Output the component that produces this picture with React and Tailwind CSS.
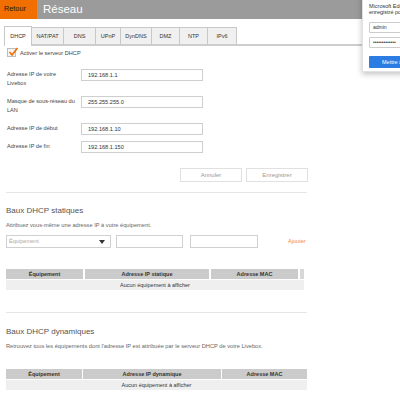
export default function App() {
  const tabs = [
    ["DHCP", "w-[28px]"],
    ["NAT/PAT", "w-[32px]"],
    ["DNS", "w-[32px]"],
    ["UPnP", "w-[25px]"],
    ["DynDNS", "w-[31px]"],
    ["DMZ", "w-[28px]"],
    ["NTP", "w-[28px]"],
    ["IPv6", "w-[29px]"],
  ];
  return (
    <div className="relative w-[400px] h-[396px] overflow-hidden bg-white font-['Liberation_Sans',Arial,sans-serif] text-[#555]">
      {/* Header */}
      <div className="flex h-[19px] bg-[#9b9b9b]">
        <div className="w-[37px] bg-[#f16e00] flex items-center pl-[4px] text-[7.3px] text-[#1a1a1a]">Retour</div>
        <div className="pl-[6px] text-[11.5px] leading-[19px] text-white">Réseau</div>
      </div>

      {/* Tabs */}
      <div className="ml-[4px] mt-[8px] flex items-end h-[19px] border-b-2 border-[#cdcdcd] w-[396px]">
        {tabs.map(([t, w], i) => (
          <div
            key={t}
            className={
              i === 0
                ? `${w} h-[20px] -mb-[2px] bg-white border border-b-0 border-[#c8c8c8] flex items-center justify-center text-[5.5px] text-[#333]`
                : `${w} h-[17px] bg-[#f0f0f0] border-t border-r border-[#c8c8c8] flex items-center justify-center text-[5.5px] text-[#333]`
            }
          >
            {t}
          </div>
        ))}
      </div>

      <div className="px-[6px]">
        {/* Checkbox */}
        <div className="flex items-end h-[10px] mt-[1px] pl-[1px]">
          <div className="w-[9px] h-[9px] border border-[#bdbdbd] bg-[#f4f4f4] relative">
            <svg viewBox="0 0 10 10" className="absolute -top-[2px] left-0 w-[10px] h-[10px]">
              <path d="M1.5 5 L4 8 L9.5 1" fill="none" stroke="#f16e00" strokeWidth="1.6" />
            </svg>
          </div>
          <div className="ml-[4px] text-[5.6px] leading-[8px] text-[#444]">Activer le serveur DHCP</div>
        </div>

        {/* Form */}
        <div className="mt-[12px] w-[301px]">
          <div className="flex h-[27px]">
            <div className="w-[75px] pl-[1px] pt-[1px] text-[5.6px] leading-[9px] text-[#444]">Adresse IP de votre<br />Livebox</div>
            <div className="w-[122px] h-[12px] border border-[#cfcfcf] pl-[6px] text-[5.6px] leading-[10px] text-[#333]">192.168.1.1</div>
          </div>
          <div className="flex h-[27px]">
            <div className="w-[75px] pl-[1px] pt-[1px] text-[5.6px] leading-[9px] text-[#444]">Masque de sous-réseau du<br />LAN</div>
            <div className="w-[122px] h-[12px] border border-[#cfcfcf] pl-[6px] text-[5.6px] leading-[10px] text-[#333]">255.255.255.0</div>
          </div>
          <div className="flex h-[18px]">
            <div className="w-[75px] pl-[1px] pt-[1px] text-[5.6px] leading-[9px] text-[#444]">Adresse IP de début</div>
            <div className="w-[122px] h-[12px] border border-[#cfcfcf] pl-[6px] text-[5.6px] leading-[10px] text-[#333]">192.168.1.10</div>
          </div>
          <div className="flex h-[11px]">
            <div className="w-[75px] pl-[1px] pt-[1px] text-[5.6px] leading-[9px] text-[#444]">Adresse IP de fin</div>
            <div className="w-[122px] h-[12px] border border-[#cfcfcf] pl-[6px] text-[5.6px] leading-[10px] text-[#333]">192.168.1.150</div>
          </div>
        </div>

        {/* Buttons */}
        <div className="mt-[16px] w-[302px] flex justify-end gap-[4px]">
          <div className="w-[62px] h-[14px] border border-[#e0e0e0] flex items-center justify-center text-[6px] text-[#999]">Annuler</div>
          <div className="w-[62px] h-[14px] border border-[#e0e0e0] flex items-center justify-center text-[6px] text-[#999]">Enregistrer</div>
        </div>

        <div className="mt-[10px] w-[301px] h-px bg-[#e6e6e6]" />

        {/* Static */}
        <div className="mt-[13px] text-[8px] leading-[10px] text-[#555]">Baux DHCP statiques</div>
        <div className="mt-[5px] text-[5.7px] leading-[8px] text-[#666]">Attribuez vous-même une adresse IP à votre équipement.</div>
        <div className="mt-[6px] flex items-center h-[13px]">
          <div className="w-[105px] h-[13px] border border-[#d0d0d0] flex items-center justify-between pl-[2px] pr-[5px]">
            <span className="text-[5.6px] text-[#aaa]">Équipement</span>
            <svg viewBox="0 0 6 4" className="w-[6px] h-[4px]"><path d="M0 0 H6 L3 4 Z" fill="#333" /></svg>
          </div>
          <div className="ml-[5px] w-[67px] h-[13px] border border-[#d0d0d0]" />
          <div className="ml-[7px] w-[68px] h-[13px] border border-[#d0d0d0]" />
          <div className="ml-[30px] text-[5.6px] text-[#f28b3a]">Ajouter</div>
        </div>

        {/* Table 1 */}
        <div className="mt-[21px] w-[298px]">
          <div className="flex gap-[2px] h-[10px]">
            <div className="w-[77px] bg-[#cbcbcb] flex items-center justify-center text-[5.5px] font-bold text-[#333]">Équipement</div>
            <div className="w-[124px] bg-[#cbcbcb] flex items-center justify-center text-[5.5px] font-bold text-[#333]">Adresse IP statique</div>
            <div className="w-[87px] bg-[#cbcbcb] flex items-center justify-center text-[5.5px] font-bold text-[#333]">Adresse MAC</div>
            <div className="w-[4px] bg-[#d8d8d8]" />
          </div>
          <div className="mt-[1px] h-[10px] bg-[#efefef] flex items-center justify-center text-[5.5px] text-[#333]">Aucun équipement à afficher</div>
        </div>

        <div className="mt-[22px] w-[301px] h-px bg-[#e6e6e6]" />

        {/* Dynamic */}
        <div className="mt-[14px] text-[8px] leading-[10px] text-[#555]">Baux DHCP dynamiques</div>
        <div className="mt-[5px] text-[5.7px] leading-[8px] text-[#666]">Retrouvez tous les équipements dont l'adresse IP est attribuée par le serveur DHCP de votre Livebox.</div>

        <div className="mt-[19px] w-[301px]">
          <div className="flex gap-[1px] h-[10px]">
            <div className="w-[76px] bg-[#cbcbcb] flex items-center justify-center text-[5.5px] font-bold text-[#333]">Équipement</div>
            <div className="w-[138px] bg-[#cbcbcb] flex items-center justify-center text-[5.5px] font-bold text-[#333]">Adresse IP dynamique</div>
            <div className="w-[85px] bg-[#cbcbcb] flex items-center justify-center text-[5.5px] font-bold text-[#333]">Adresse MAC</div>
          </div>
          <div className="mt-[1px] h-[10px] bg-[#efefef] flex items-center justify-center text-[5.5px] text-[#333]">Aucun équipement à afficher</div>
        </div>
      </div>

      {/* Edge password popup */}
      <div className="absolute left-[362px] -top-[10px] w-[60px] h-[82px] bg-white border border-[#e2e2e2] shadow-[0_2px_6px_rgba(0,0,0,0.25)] pl-[6px] pt-[12px] overflow-hidden">
        <div className="text-[5.5px] leading-[6px] text-[#333] whitespace-nowrap">Microsoft Edge</div>
        <div className="text-[5.5px] leading-[6px] text-[#333] whitespace-nowrap">enregistré pour</div>
        <div className="mt-[7px] w-[50px] h-[11px] border border-[#ccc] rounded-[1px] pl-[3px] text-[5px] leading-[9px] text-[#333]">admin</div>
        <div className="mt-[4px] w-[50px] h-[11px] border border-[#ccc] rounded-[1px] pl-[3px] text-[5px] leading-[9px] text-[#333] whitespace-nowrap overflow-hidden">•••••••••••••</div>
        <div className="mt-[8px] w-[50px] h-[12px] bg-[#2b7de3] rounded-[1px] pl-[13px] text-[5.5px] leading-[12px] text-white whitespace-nowrap">Mettre à jour</div>
      </div>
    </div>
  );
}
